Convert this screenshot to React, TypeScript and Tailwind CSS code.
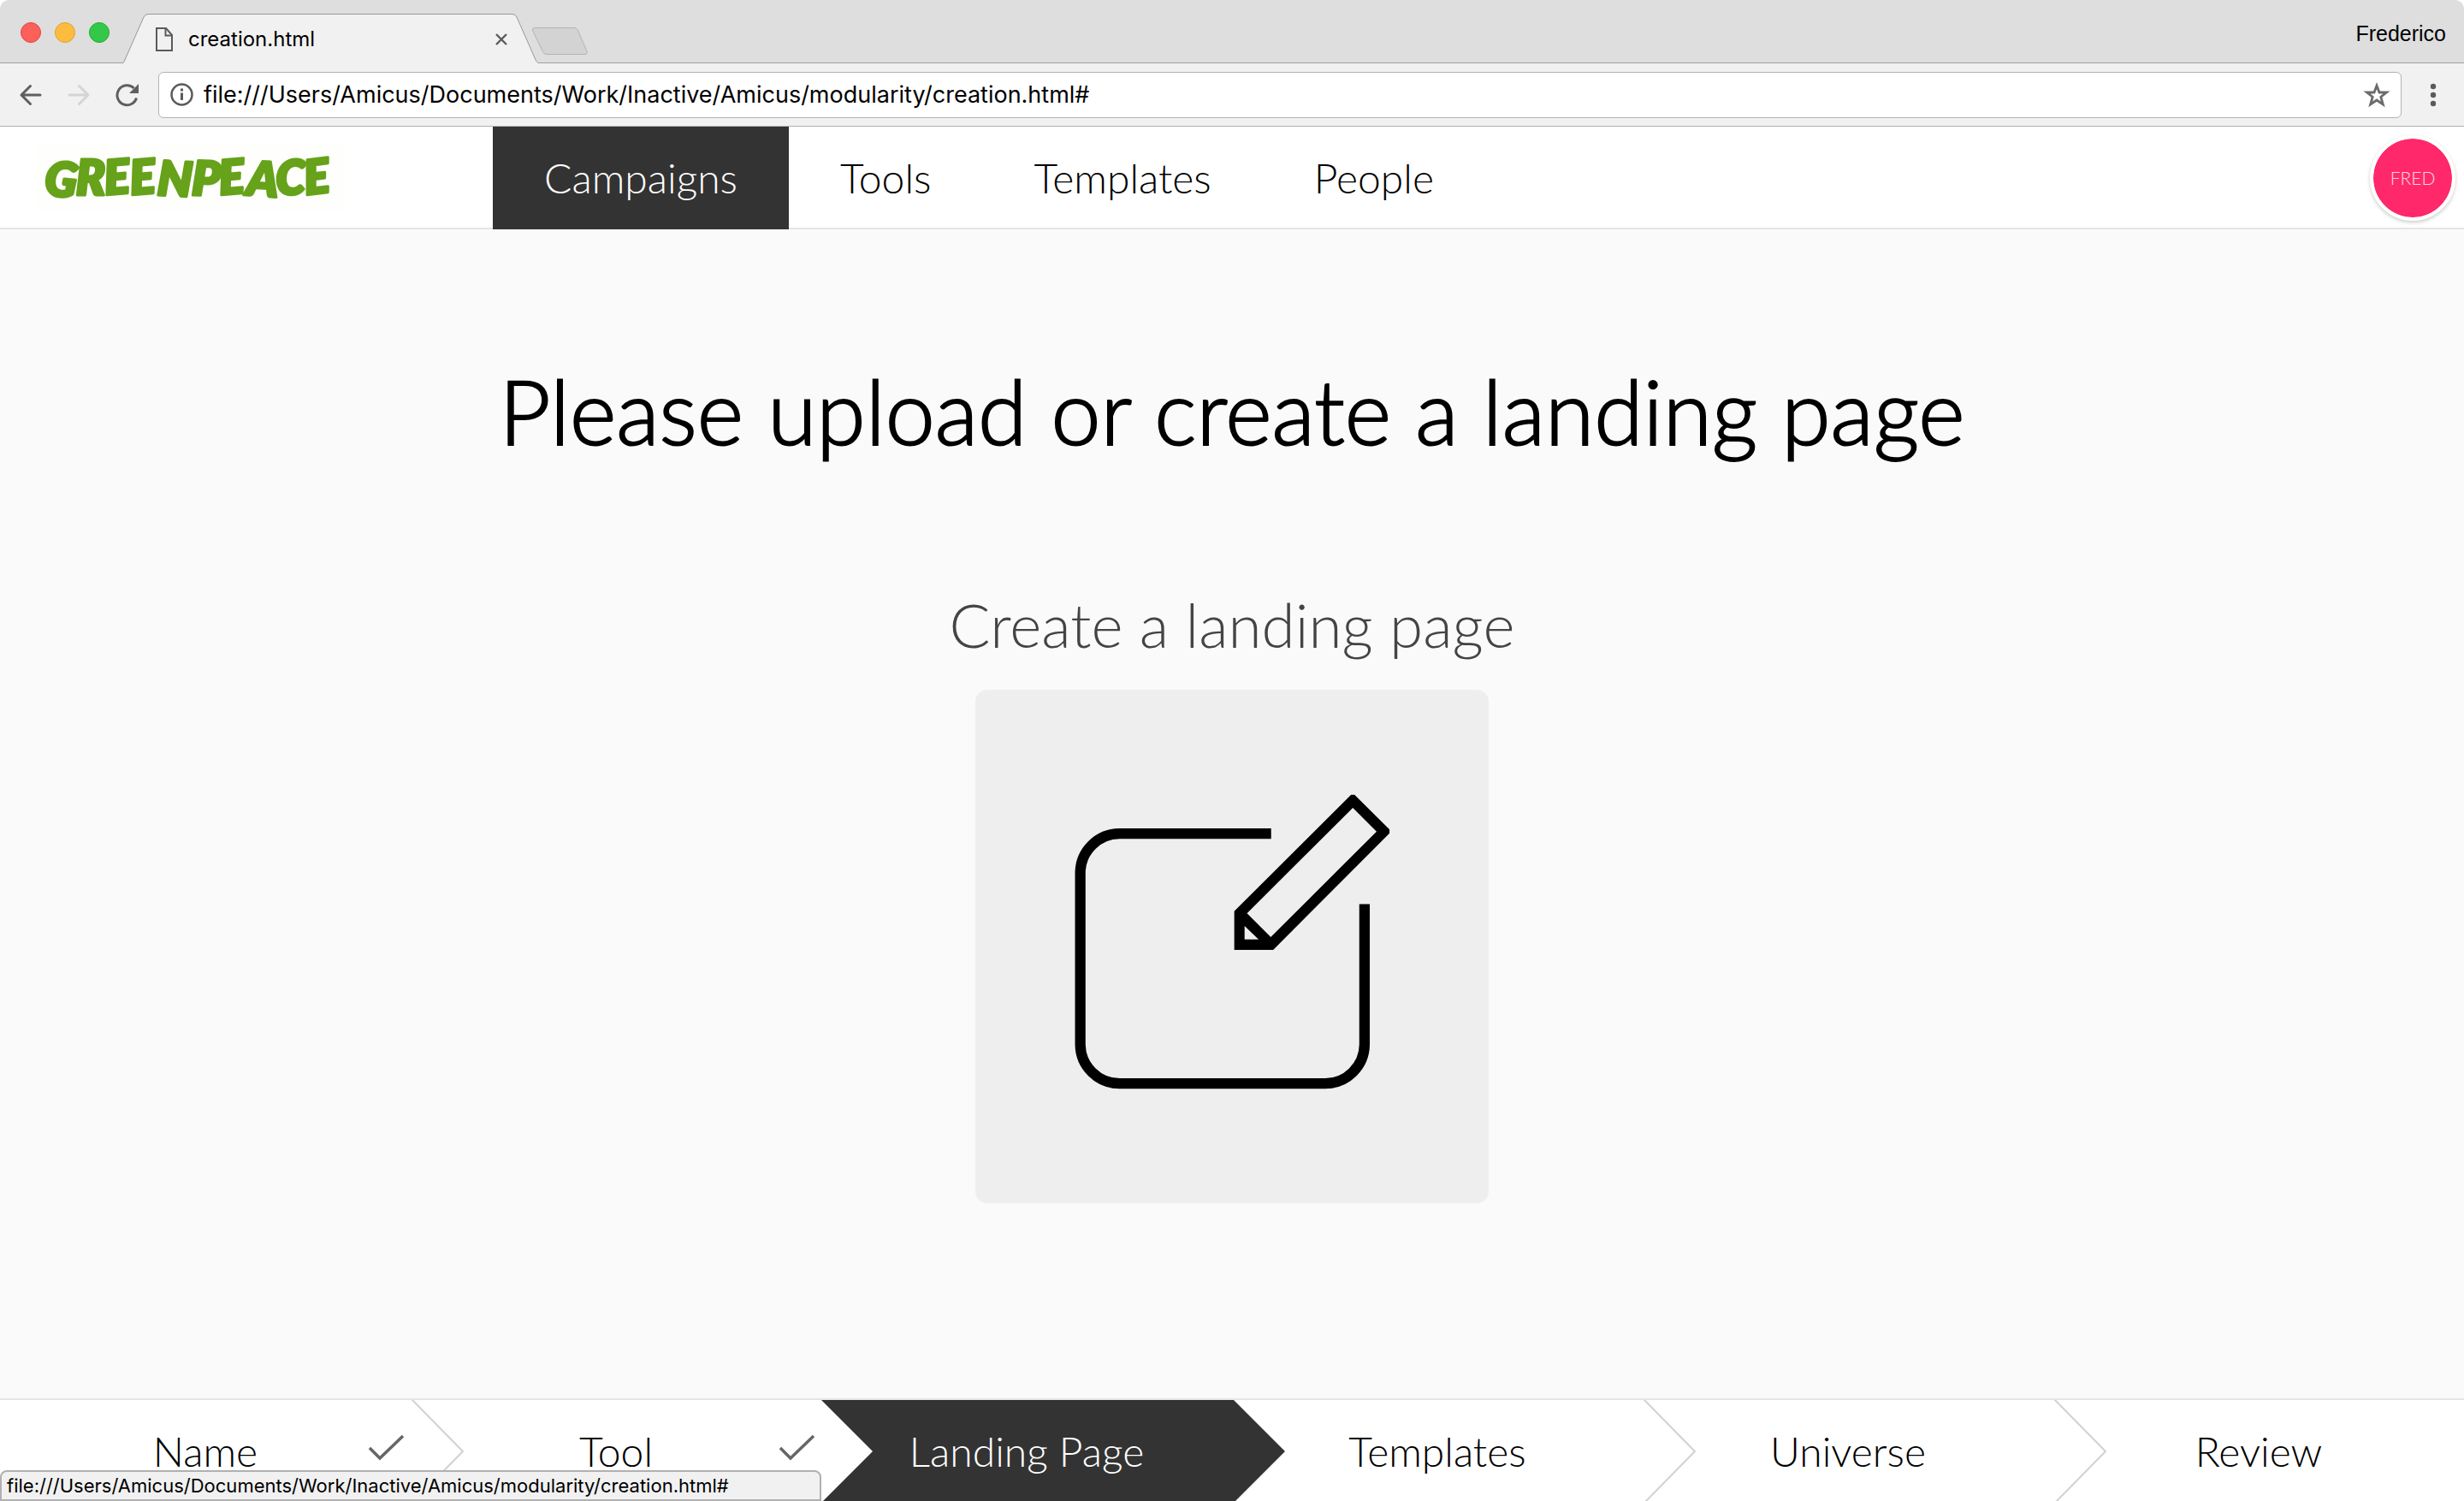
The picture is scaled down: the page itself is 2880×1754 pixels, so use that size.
const FILE_URL = "file:///Users/Amicus/Documents/Work/Inactive/Amicus/modularity/creation.html#";

const NAV = ["Campaigns", "Tools", "Templates", "People"];

const STEPS = [
  { name: "Name", done: true },
  { name: "Tool", done: true },
  { name: "Landing Page", active: true },
  { name: "Templates" },
  { name: "Universe" },
  { name: "Review" },
];

function TabStrip() {
  return (
    <div className="flex h-[74px] items-end rounded-t-[10px] border-b border-[#a0a0a0] bg-[#dedede]">
      <div className="flex gap-4 self-center pt-0.5 pl-6">
        <button aria-label="Close window" className="size-6 rounded-full border border-[#e2463f] bg-[#fc605b]" />
        <button aria-label="Minimise window" className="size-6 rounded-full border border-[#dfa123] bg-[#fdbc40]" />
        <button aria-label="Zoom window" className="size-6 rounded-full border border-[#1dad2b] bg-[#34c84a]" />
      </div>
      <div className="relative -mb-px ml-4 flex h-[58px] w-[485px] items-center pt-0.5 pr-9 pl-[38px]">
        <svg className="absolute inset-0" width="485" height="58" viewBox="0 0 485 58" aria-hidden="true">
          <path d="M0 58 L1 56 L24 4 Q25.500 .5 29 .5 H455 Q458.500 .5 460 4 L483 56 L485 58 Z" fill="#f1f1f1" />
          <path d="M0 57.500 L1.500 55 L24 4 Q25.500 .5 29 .5 H455 Q458.500 .5 460 4 L482.500 55 L485 57.500" fill="none" stroke="#989898" />
        </svg>
        <svg className="relative" width="20" height="28" viewBox="0 0 20 28" fill="none" stroke="#5a5a5a" strokeWidth="2" aria-hidden="true">
          <path d="M1 1 H12 L19 9 V27 H1 Z" />
          <path d="M11.500 1 V9.500 H19" />
        </svg>
        <span className="relative ml-[18px] flex-1 font-['Inter','Liberation_Sans',sans-serif] text-[24px]">creation.html</span>
        <button aria-label="Close tab" className="relative">
          <svg width="14" height="14" viewBox="0 0 14 14" stroke="#5a5a5a" strokeWidth="2.400" aria-hidden="true">
            <path d="M1 1 L13 13 M13 1 L1 13" />
          </svg>
        </button>
      </div>
      <button aria-label="New tab" className="mb-2 -ml-2">
        <svg width="67" height="33" viewBox="0 0 67 33" aria-hidden="true">
          <path d="M4 .5 H50 Q53 .5 54.500 3.500 L65 28 Q66 31.500 63 31.500 H18 Q15 31.500 13.500 28.500 L1.500 3.500 Q1 .5 4 .5 Z" fill="#d3d3d3" stroke="#b4b4b4" />
        </svg>
      </button>
      <span className="ml-auto self-center pt-1 pr-[21px] font-['Liberation_Sans',sans-serif] text-[25px] leading-7">Frederico</span>
    </div>
  );
}

function Toolbar() {
  return (
    <div className="flex h-[74px] items-center border-b border-[#b0b0b0] bg-[#f1f1f1] pl-[22px]">
      <div className="flex gap-7">
        <button aria-label="Back">
          <svg width="28" height="28" viewBox="0 0 28 28" fill="none" stroke="#5f5f5f" strokeWidth="3" strokeLinecap="round" strokeLinejoin="round" aria-hidden="true">
            <path d="M25 14 H3 M13.500 3.500 L3 14 L13.500 24.500" />
          </svg>
        </button>
        <button aria-label="Forward">
          <svg width="28" height="28" viewBox="0 0 28 28" fill="none" stroke="#d4d4d4" strokeWidth="3" strokeLinecap="round" strokeLinejoin="round" aria-hidden="true">
            <path d="M3 14 H25 M14.500 3.500 L25 14 L14.500 24.500" />
          </svg>
        </button>
        <button aria-label="Reload">
          <svg width="30" height="28" viewBox="0 0 30 28" aria-hidden="true">
            <path d="M25.500 17.500 A11.500 11.500 0 1 1 22.500 6" fill="none" stroke="#5f5f5f" strokeWidth="3" />
            <path d="M28 1 V12 H17 Z" fill="#5f5f5f" />
          </svg>
        </button>
      </div>
      <div className="ml-[21px] flex h-[54px] flex-1 items-center rounded-md border border-[#b3b3b3] bg-white pr-3 pl-[13px]">
        <svg className="shrink-0" width="27" height="27" viewBox="0 0 27 27" aria-hidden="true">
          <circle cx="13.500" cy="13.500" r="12" fill="none" stroke="#5a5a5a" strokeWidth="2.500" />
          <path d="M12 11.500 H15 V20 H12 Z M12 6.500 H15 V9.500 H12 Z" fill="#5a5a5a" />
        </svg>
        <input
          aria-label="Address"
          className="ml-3 min-w-0 flex-1 bg-transparent pt-0.5 font-['Inter','Liberation_Sans',sans-serif] text-[27px] text-black outline-none"
          defaultValue={FILE_URL}
        />
        <button aria-label="Bookmark this page">
          <svg width="32" height="30" viewBox="0 0 32 30" aria-hidden="true">
            <path d="M16 4 L19 12 H27.500 L20.800 17.200 L23.300 26 L16 21 L8.700 26 L11.200 17.200 L4.500 12 H13 Z" fill="none" stroke="#6b6b6b" strokeWidth="2.800" />
          </svg>
        </button>
      </div>
      <button aria-label="Menu" className="mr-8 ml-[33px]">
        <svg width="8" height="28" viewBox="0 0 8 28" fill="#5a5a5a" aria-hidden="true">
          <circle cx="4" cy="4" r="3.200" />
          <circle cx="4" cy="14" r="3.200" />
          <circle cx="4" cy="24" r="3.200" />
        </svg>
      </button>
    </div>
  );
}

function Logo() {
  return (
    <svg className="overflow-visible" width="360" height="78" viewBox="0 0 360 78" role="img" aria-label="Greenpeace">
      <rect width="360" height="78" fill="#fefefc" />
      <text
        x="9"
        y="60"
        rotate="5 0 -5 -5 3 2 -5 4 -2 -7"
        className="fill-[#66a21a] stroke-[#66a21a] font-['Lato',sans-serif] text-[56px] font-extrabold italic"
        strokeWidth="3"
        strokeLinejoin="round"
      >
        GREENPEACE
      </text>
    </svg>
  );
}

function Header() {
  return (
    <header className="flex h-[120px] border-b-2 border-[#e5e5e5] bg-white">
      <a href="#" className="flex w-1/5 items-center pl-[42px]">
        <Logo />
      </a>
      <nav className="-mb-[2px] flex">
        {NAV.map((item, i) => (
          <a
            key={item}
            href="#"
            className={`flex items-center px-[60px] text-[48px] leading-none font-light ${i === 0 ? "bg-[#333] text-white" : "text-black"}`}
          >
            {item}
          </a>
        ))}
      </nav>
      <button className="mt-2.5 mr-2.5 ml-auto size-[100px] rounded-full border-4 border-white bg-[#ff286a] bg-clip-padding text-[21px] font-light text-white/80 shadow-[0_2px_4px_rgba(0,0,0,0.2)]">
        FRED
      </button>
    </header>
  );
}

function Compose() {
  return (
    <svg className="size-full" viewBox="49 64 1470 1470" aria-hidden="true">
      <path d="M896 476 H462 A113 113 0 0 0 349.500 588 V1080 A113 113 0 0 0 462 1191.500 H1051 A113 113 0 0 0 1163.500 1080 V678" fill="none" stroke="#000" strokeWidth="30" />
      <path fillRule="evenodd" d="M1125 365 H1135 L1235 464 V475 L902 808.500 H790.500 V698 Z M1130 402 L827 704 L895 772 L1198 470 Z M820 740 V779 H860 Z" />
    </svg>
  );
}

function Steps() {
  return (
    <footer className="h-[120px] overflow-hidden border-t-2 border-[#e5e5e5] bg-white">
      <ol className="grid h-[120px] grid-cols-6">
        {STEPS.map((step, i) => (
          <li key={step.name} className="relative">
            {step.active && (
              <span className="absolute inset-y-0 -right-[62px] left-0 bg-[#333] [clip-path:polygon(0_0,calc(100%-60px)_0,100%_50%,calc(100%-60px)_100%,0_100%,60px_50%)]" />
            )}
            {!step.active && i !== 1 && i < STEPS.length - 1 && (
              <svg className="absolute top-0 -right-[62px]" width="61" height="120" viewBox="0 0 61 120" fill="none" stroke="#d2d2d2" strokeWidth="2" aria-hidden="true">
                <path d="M0 -1 L60 60 L0 121" />
              </svg>
            )}
            <a
              href="#"
              aria-current={step.active ? "step" : undefined}
              className={`relative flex h-full items-center justify-center text-[48px] leading-none font-light ${step.active ? "text-white" : "text-black"}`}
            >
              {step.name}
            </a>
            {step.done && (
              <svg className="absolute top-10 right-[5px]" width="45" height="34" viewBox="0 0 45 34" fill="none" stroke="#666" strokeWidth="3.500" aria-hidden="true">
                <path d="M2 16 L14 28 L41 2" />
              </svg>
            )}
          </li>
        ))}
      </ol>
    </footer>
  );
}

export default function App() {
  return (
    <div className="relative flex min-h-screen flex-col bg-white font-['Lato',sans-serif] text-black">
      <TabStrip />
      <Toolbar />
      <Header />
      <main className="flex flex-1 flex-col items-center bg-[#fafafa] pt-[146px]">
        <h1 className="text-[104px] leading-[132px] font-light [-webkit-text-stroke:2px_black]">Please upload or create a landing page</h1>
        <h2 className="mt-[140px] text-[71px] leading-[88px] font-light text-[#444]">Create a landing page</h2>
        <button aria-label="Create a landing page" className="mt-8 size-[600px] rounded-[14px] bg-[#eee]">
          <Compose />
        </button>
      </main>
      <Steps />
      <div className="absolute bottom-0 left-0 flex h-9 w-[960px] items-center rounded-t-lg border-2 border-[#b0b0b0] bg-[#f1f1f1] pl-1.5 font-['Inter','Liberation_Sans',sans-serif] text-[22px] leading-none">
        {FILE_URL}
      </div>
    </div>
  );
}
